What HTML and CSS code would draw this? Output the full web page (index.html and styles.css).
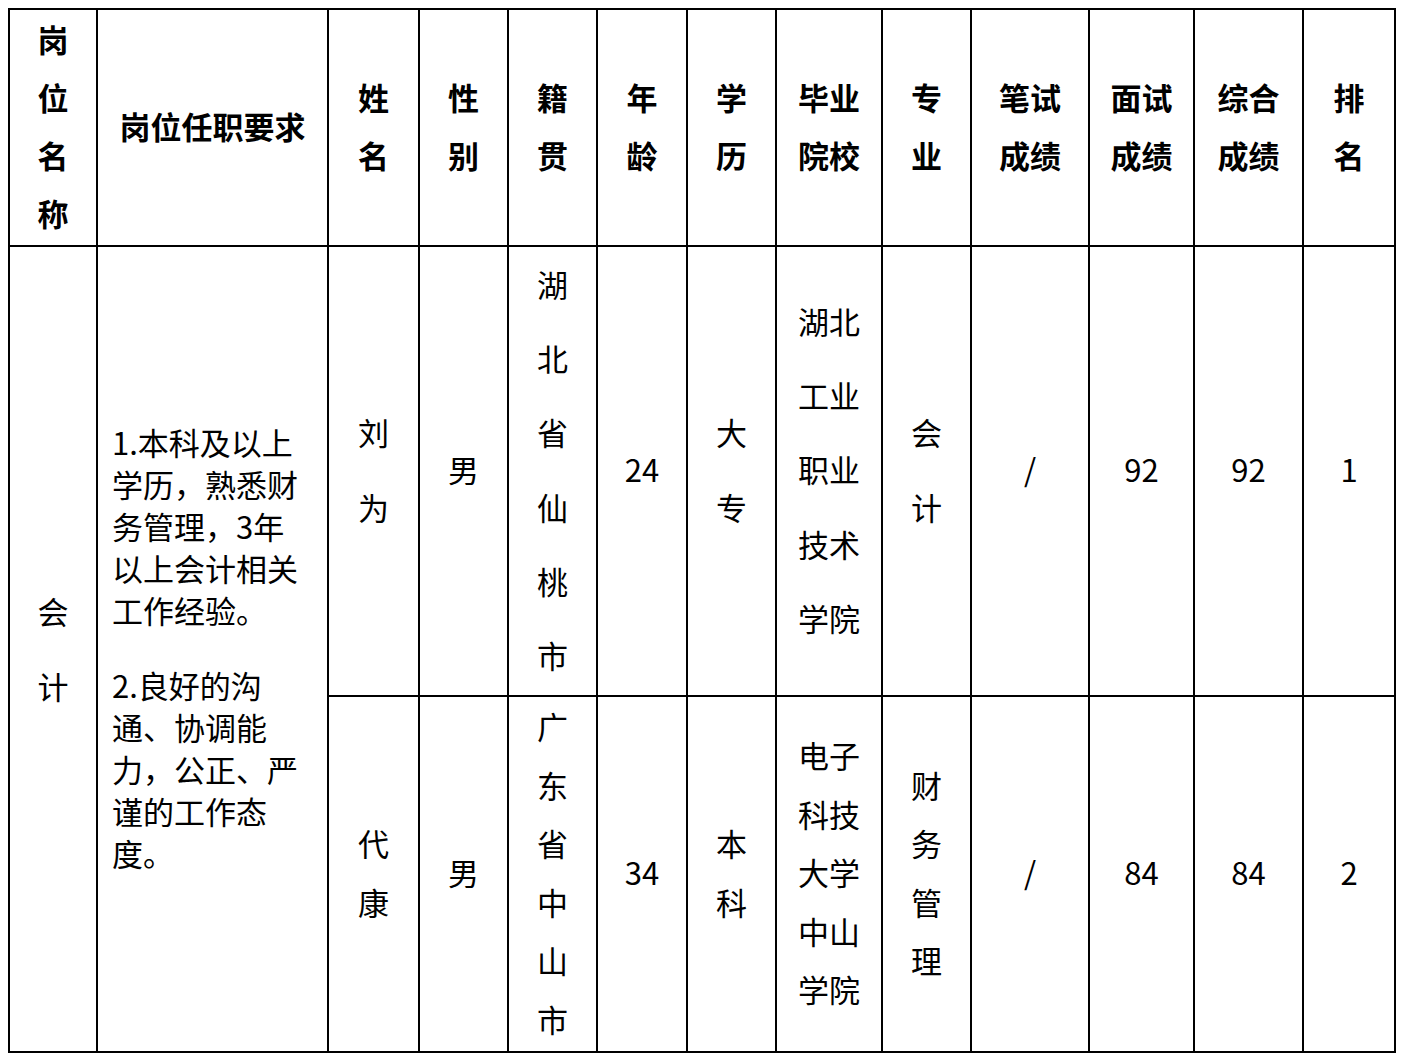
FILE: index.html
```html
<!DOCTYPE html>
<html lang="zh-CN">
<head>
<meta charset="utf-8">
<title>岗位成绩表</title>
<link rel="stylesheet" href="styles.css">
</head>
<body>
<table class="sheet">
  <colgroup>
    <col class="c88">
    <col class="c231">
    <col class="c91">
    <col class="c89">
    <col class="c89">
    <col class="c90">
    <col class="c89">
    <col class="c106">
    <col class="c89">
    <col class="c118">
    <col class="c105">
    <col class="c109">
    <col class="c92">
  </colgroup>
  <tr class="head">
    <th><div class="v1">岗位名称</div></th>
    <th>岗位任职要求</th>
    <th><div class="v1">姓名</div></th>
    <th><div class="v1">性别</div></th>
    <th><div class="v1">籍贯</div></th>
    <th><div class="v1">年龄</div></th>
    <th><div class="v1">学历</div></th>
    <th><div class="v2">毕业院校</div></th>
    <th><div class="v1">专业</div></th>
    <th><div class="v2">笔试成绩</div></th>
    <th><div class="v2">面试成绩</div></th>
    <th><div class="v2">综合成绩</div></th>
    <th><div class="v1">排名</div></th>
  </tr>
  <tr class="r1">
    <td rowspan="2" class="tall"><div class="v1">会计</div></td>
    <td rowspan="2" class="req">
      <div class="req-box">
        <p>1.本科及以上学历，熟悉财务管理，3年以上会计相关工作经验。</p>
        <p>2.良好的沟通、协调能力，公正、严谨的工作态度。</p>
      </div>
    </td>
    <td><div class="v1">刘为</div></td>
    <td>男</td>
    <td><div class="v1">湖北省仙桃市</div></td>
    <td>24</td>
    <td><div class="v1">大专</div></td>
    <td><div class="v2">湖北工业职业技术学院</div></td>
    <td><div class="v1">会计</div></td>
    <td>/</td>
    <td>92</td>
    <td>92</td>
    <td>1</td>
  </tr>
  <tr class="r2">
    <td><div class="v1">代康</div></td>
    <td>男</td>
    <td><div class="v1">广东省中山市</div></td>
    <td>34</td>
    <td><div class="v1">本科</div></td>
    <td><div class="v2">电子科技大学中山学院</div></td>
    <td><div class="v1">财务管理</div></td>
    <td>/</td>
    <td>84</td>
    <td>84</td>
    <td>2</td>
  </tr>
</table>
</body>
</html>
```

FILE: styles.css
```css
html, body {
  margin: 0;
  padding: 0;
  background: #ffffff;
}

body {
  padding: 8px;
  font-family: "Noto Sans CJK SC", "Noto Sans", sans-serif;
  font-size: 31px;
  color: #000000;
}

.sheet {
  border-collapse: collapse;
  table-layout: fixed;
  width: 1388px;
  border: 2px solid #000;
}

.c88 { width: 88px; }
.c231 { width: 231px; }
.c91 { width: 91px; }
.c89 { width: 89px; }
.c90 { width: 90px; }
.c106 { width: 106px; }
.c118 { width: 118px; }
.c105 { width: 105px; }
.c109 { width: 109px; }
.c92 { width: 92px; }

.sheet th,
.sheet td {
  border: 2px solid #000;
  padding: 0 0 3px 0;
  text-align: center;
  vertical-align: middle;
  overflow: visible;
}

.sheet th {
  font-weight: 700;
  line-height: 58px;
}

.head { height: 237px; }
.r1 { height: 450px; }
.r2 { height: 356px; }

.r1 td { line-height: 74.1px; }
.r2 td { line-height: 58.5px; }
.sheet td.tall { line-height: 75px; }

.v1 {
  width: 1em;
  margin: 0 auto;
  word-break: break-all;
}

.v2 {
  width: 2em;
  margin: 0 auto;
  word-break: break-all;
}

.sheet td.req {
  text-align: left;
  line-height: 42px;
  padding: 0 0 3px 14px;
}

.req-box {
  width: 195px;
  line-break: strict;
}

.req-box p {
  margin: 0;
}

.req-box p + p {
  margin-top: 33px;
}
```
